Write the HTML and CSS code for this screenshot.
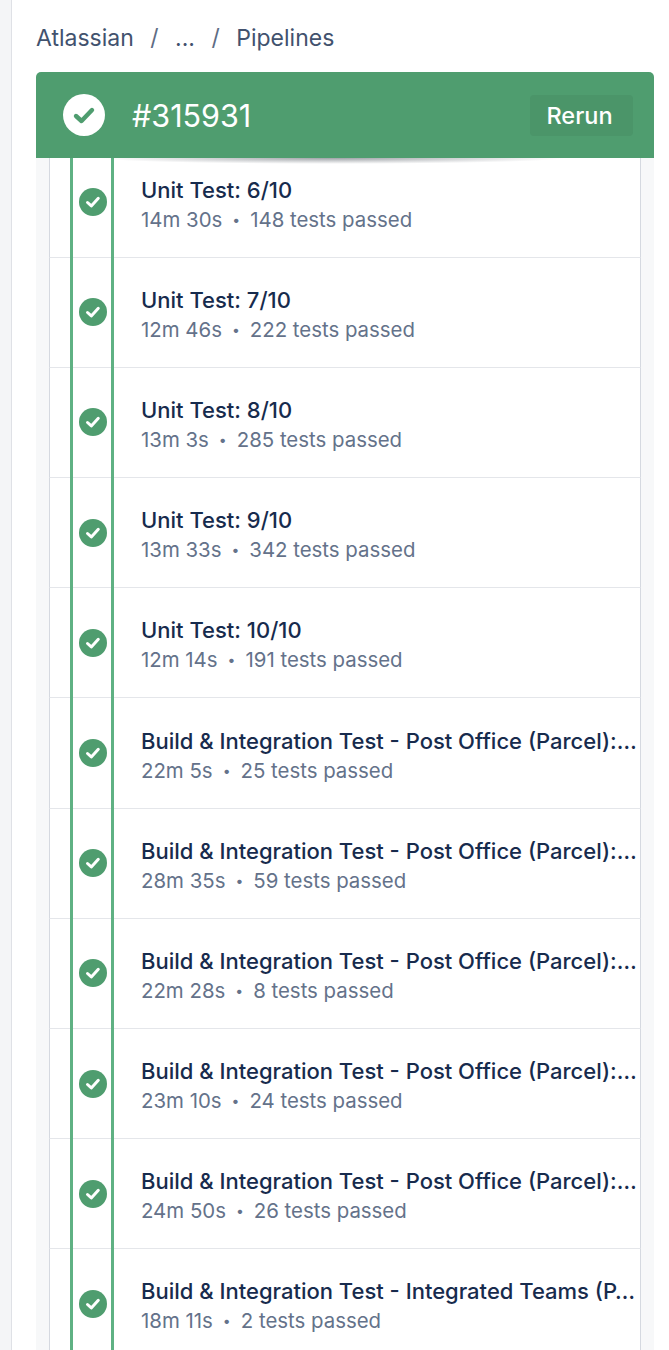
FILE: index.html
```html
<!DOCTYPE html>
<html lang="en">
<head>
    <meta charset="UTF-8">
    <meta name="viewport" content="width=device-width, initial-scale=1.0">
    <title>Pipelines</title>
    <link rel="stylesheet" href="styles.css">
</head>
<body>

<div class="page">
    <!-- Breadcrumb -->
    <div class="breadcrumb">
        <span>Atlassian</span>
        <span class="sep">/</span>
        <span>...</span>
        <span class="sep">/</span>
        <span>Pipelines</span>
    </div>

    <!-- Build header -->
    <div class="header">
        <svg class="header-icon" viewBox="0 0 42 42">
            <circle cx="21" cy="21" r="21" fill="#fff"/>
            <path d="M13 22l5.5 5L29 16" fill="none" stroke="#4f9d6f" stroke-width="4.4" stroke-linecap="round" stroke-linejoin="round"/>
        </svg>
        <div class="build-number">#315931</div>
        <button class="rerun">Rerun</button>
    </div>

    <!-- Steps -->
    <div class="steps">
        <div class="line line-left"></div>
        <div class="line line-right"></div>

        <div class="step">
            <svg class="step-icon" viewBox="0 0 28 28"><circle cx="14" cy="14" r="14" fill="#4f9d6f"/><path d="M8.5 14.5l3.8 3.4 7-7.6" fill="none" stroke="#fff" stroke-width="3" stroke-linecap="round" stroke-linejoin="round"/></svg>
            <div class="step-text">
                <div class="step-title">Unit Test: 6/10</div>
                <div class="step-meta"><span>14m 30s</span><span class="dot">•</span><span>148 tests passed</span></div>
            </div>
        </div>
        <div class="step">
            <svg class="step-icon" viewBox="0 0 28 28"><circle cx="14" cy="14" r="14" fill="#4f9d6f"/><path d="M8.5 14.5l3.8 3.4 7-7.6" fill="none" stroke="#fff" stroke-width="3" stroke-linecap="round" stroke-linejoin="round"/></svg>
            <div class="step-text">
                <div class="step-title">Unit Test: 7/10</div>
                <div class="step-meta"><span>12m 46s</span><span class="dot">•</span><span>222 tests passed</span></div>
            </div>
        </div>
        <div class="step">
            <svg class="step-icon" viewBox="0 0 28 28"><circle cx="14" cy="14" r="14" fill="#4f9d6f"/><path d="M8.5 14.5l3.8 3.4 7-7.6" fill="none" stroke="#fff" stroke-width="3" stroke-linecap="round" stroke-linejoin="round"/></svg>
            <div class="step-text">
                <div class="step-title">Unit Test: 8/10</div>
                <div class="step-meta"><span>13m 3s</span><span class="dot">•</span><span>285 tests passed</span></div>
            </div>
        </div>
        <div class="step">
            <svg class="step-icon" viewBox="0 0 28 28"><circle cx="14" cy="14" r="14" fill="#4f9d6f"/><path d="M8.5 14.5l3.8 3.4 7-7.6" fill="none" stroke="#fff" stroke-width="3" stroke-linecap="round" stroke-linejoin="round"/></svg>
            <div class="step-text">
                <div class="step-title">Unit Test: 9/10</div>
                <div class="step-meta"><span>13m 33s</span><span class="dot">•</span><span>342 tests passed</span></div>
            </div>
        </div>
        <div class="step">
            <svg class="step-icon" viewBox="0 0 28 28"><circle cx="14" cy="14" r="14" fill="#4f9d6f"/><path d="M8.5 14.5l3.8 3.4 7-7.6" fill="none" stroke="#fff" stroke-width="3" stroke-linecap="round" stroke-linejoin="round"/></svg>
            <div class="step-text">
                <div class="step-title">Unit Test: 10/10</div>
                <div class="step-meta"><span>12m 14s</span><span class="dot">•</span><span>191 tests passed</span></div>
            </div>
        </div>
        <div class="step">
            <svg class="step-icon" viewBox="0 0 28 28"><circle cx="14" cy="14" r="14" fill="#4f9d6f"/><path d="M8.5 14.5l3.8 3.4 7-7.6" fill="none" stroke="#fff" stroke-width="3" stroke-linecap="round" stroke-linejoin="round"/></svg>
            <div class="step-text">
                <div class="step-title">Build &amp; Integration Test - Post Office (Parcel):…</div>
                <div class="step-meta"><span>22m 5s</span><span class="dot">•</span><span>25 tests passed</span></div>
            </div>
        </div>
        <div class="step">
            <svg class="step-icon" viewBox="0 0 28 28"><circle cx="14" cy="14" r="14" fill="#4f9d6f"/><path d="M8.5 14.5l3.8 3.4 7-7.6" fill="none" stroke="#fff" stroke-width="3" stroke-linecap="round" stroke-linejoin="round"/></svg>
            <div class="step-text">
                <div class="step-title">Build &amp; Integration Test - Post Office (Parcel):…</div>
                <div class="step-meta"><span>28m 35s</span><span class="dot">•</span><span>59 tests passed</span></div>
            </div>
        </div>
        <div class="step">
            <svg class="step-icon" viewBox="0 0 28 28"><circle cx="14" cy="14" r="14" fill="#4f9d6f"/><path d="M8.5 14.5l3.8 3.4 7-7.6" fill="none" stroke="#fff" stroke-width="3" stroke-linecap="round" stroke-linejoin="round"/></svg>
            <div class="step-text">
                <div class="step-title">Build &amp; Integration Test - Post Office (Parcel):…</div>
                <div class="step-meta"><span>22m 28s</span><span class="dot">•</span><span>8 tests passed</span></div>
            </div>
        </div>
        <div class="step">
            <svg class="step-icon" viewBox="0 0 28 28"><circle cx="14" cy="14" r="14" fill="#4f9d6f"/><path d="M8.5 14.5l3.8 3.4 7-7.6" fill="none" stroke="#fff" stroke-width="3" stroke-linecap="round" stroke-linejoin="round"/></svg>
            <div class="step-text">
                <div class="step-title">Build &amp; Integration Test - Post Office (Parcel):…</div>
                <div class="step-meta"><span>23m 10s</span><span class="dot">•</span><span>24 tests passed</span></div>
            </div>
        </div>
        <div class="step">
            <svg class="step-icon" viewBox="0 0 28 28"><circle cx="14" cy="14" r="14" fill="#4f9d6f"/><path d="M8.5 14.5l3.8 3.4 7-7.6" fill="none" stroke="#fff" stroke-width="3" stroke-linecap="round" stroke-linejoin="round"/></svg>
            <div class="step-text">
                <div class="step-title">Build &amp; Integration Test - Post Office (Parcel):…</div>
                <div class="step-meta"><span>24m 50s</span><span class="dot">•</span><span>26 tests passed</span></div>
            </div>
        </div>
        <div class="step">
            <svg class="step-icon" viewBox="0 0 28 28"><circle cx="14" cy="14" r="14" fill="#4f9d6f"/><path d="M8.5 14.5l3.8 3.4 7-7.6" fill="none" stroke="#fff" stroke-width="3" stroke-linecap="round" stroke-linejoin="round"/></svg>
            <div class="step-text">
                <div class="step-title">Build &amp; Integration Test - Integrated Teams (P…</div>
                <div class="step-meta"><span>18m 11s</span><span class="dot">•</span><span>2 tests passed</span></div>
            </div>
        </div>
    </div>
</div>

</body>
</html>
```

FILE: styles.css
```css
body {
    margin: 0;
    height: 1350px;
    overflow: hidden;
    background-color: #f4f5f7;
    font-family: Inter, "Liberation Sans", sans-serif;
}

.page {
    margin-left: 11px;
    height: 100%;
    padding: 0 15px 0 24px;
    background-color: #fff;
    border-left: 1px solid #dfe1e6;
    overflow: hidden;
}

.breadcrumb {
    display: flex;
    align-items: center;
    gap: 16.5px;
    height: 72px;
    padding-top: 3px;
    box-sizing: border-box;
    font-size: 23px;
    color: #42526e;
}

.sep {
    color: #5e6c84;
}

.header {
    position: relative;
    z-index: 2;
    display: flex;
    align-items: center;
    height: 86px;
    padding: 0 21px 0 27px;
    background-color: #4f9d6f;
    border-radius: 5px 5px 0 0;
}

/* thin shadow falling on the first row */
.header::after {
    content: "";
    position: absolute;
    left: 10%;
    right: 14%;
    top: 100%;
    height: 6px;
    background: radial-gradient(ellipse at top, rgba(40, 50, 60, 0.45), rgba(40, 50, 60, 0) 70%);
}

.header-icon {
    width: 42px;
    height: 42px;
    flex-shrink: 0;
}

.build-number {
    margin-left: 27px;
    flex-grow: 1;
    font-size: 30.5px;
    color: #fff;
}

.rerun {
    width: 103px;
    height: 41px;
    padding: 0 4px 0 0;
    border: none;
    border-radius: 4px;
    background-color: #4b9569;
    color: #fff;
    font-family: inherit;
    font-size: 23.5px;
    font-weight: 500;
}

.steps {
    position: relative;
    margin-top: -10.5px;
    padding: 0 13px;
    background-color: #f7f8f9;
}

.line {
    position: absolute;
    top: 0;
    bottom: 0;
    width: 3px;
    background-color: #5fb183;
    z-index: 1;
}

.line-left {
    left: 34px;
}

.line-right {
    left: 75px;
}

.step {
    display: flex;
    align-items: center;
    height: 109.2px;
    background-color: #fff;
    border-left: 1px solid #d5d9e0;
    border-right: 1px solid #d5d9e0;
    border-bottom: 1px solid #e4e6ea;
}

.step-icon {
    width: 28px;
    height: 28px;
    flex-shrink: 0;
    margin-left: 29px;
    position: relative;
    z-index: 2;
}

.step-text {
    margin-left: 34px;
    padding-top: 4px;
    min-width: 0;
    flex-grow: 1;
}

.step-title {
    font-size: 22px;
    font-weight: 500;
    line-height: 30px;
    color: #172b4d;
    white-space: nowrap;
}

.step-meta {
    display: flex;
    margin-top: 1px;
    font-size: 20.4px;
    line-height: 28px;
    color: #64728a;
}

.dot {
    margin: 0 10px;
    font-size: 14px;
}
```
